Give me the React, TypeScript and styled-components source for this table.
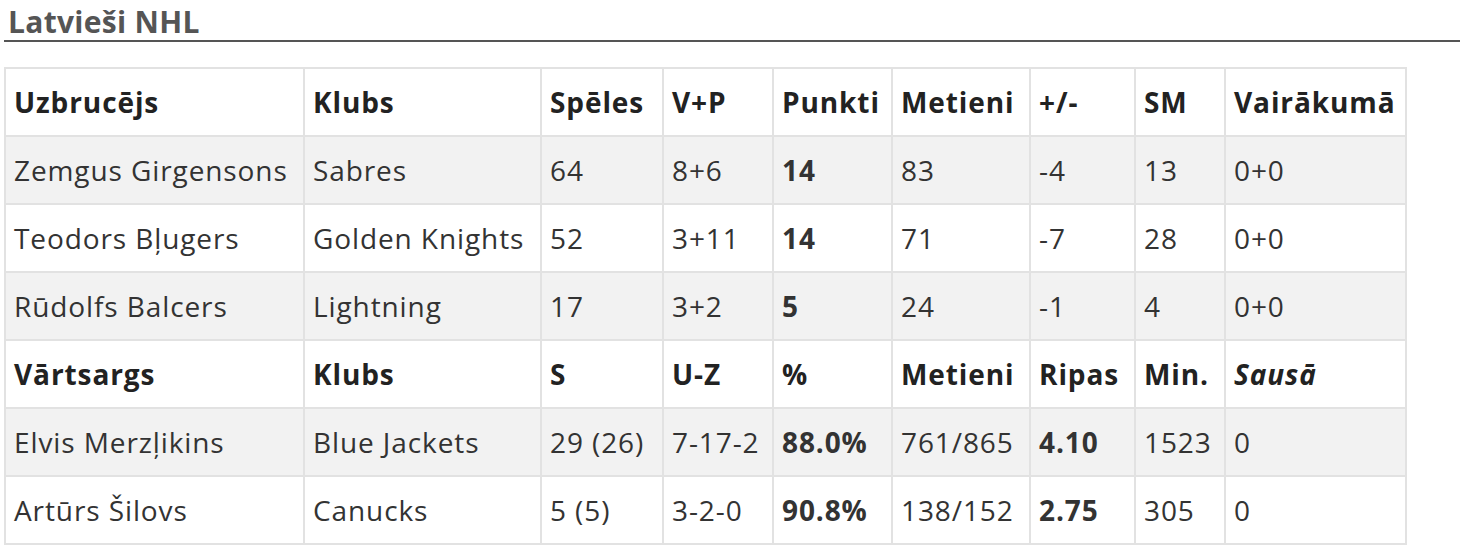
import React from "react";
import styled, { createGlobalStyle } from "styled-components";

const Global = createGlobalStyle`
  html, body { margin: 0; padding: 0; background: #fff; }
  body { font-family: "Open Sans", "Noto Sans", sans-serif; color: #333; }
`;

const Page = styled.div`
  padding: 0 0 0 4px;
`;

const Heading = styled.h2`
  margin: 0;
  padding: 3px 0 0 4px;
  height: 37px;
  font-size: 30px;
  line-height: 37px;
  font-weight: 700;
  letter-spacing: 0.3px;
  color: #555;
  border-bottom: 2px solid #555;
  box-sizing: content-box;
`;

const Table = styled.table`
  margin-top: 25px;
  border-collapse: collapse;
  table-layout: fixed;
  width: 1401px;
  border: 2px solid #e2e2e2;
`;

const Row = styled.tr<{ $shade?: boolean }>`
  height: 68px;
  background: ${(p) => (p.$shade ? "#f2f2f2" : "#fff")};
`;

const Cell = styled.td<{ $bold?: boolean; $italic?: boolean; $head?: boolean }>`
  padding: 0 6px 0 8px;
  border: 2px solid #e2e2e2;
  font-size: 28px;
  letter-spacing: 0.9px;
  white-space: nowrap;
  overflow: hidden;
  font-weight: ${(p) => (p.$bold || p.$head ? 700 : 400)};
  font-style: ${(p) => (p.$italic ? "italic" : "normal")};
  color: ${(p) => (p.$head ? "#222" : "#333")};
`;

const widths = [299, 237, 122, 110, 119, 138, 105, 90, 181];

type C = { t: string; b?: boolean; i?: boolean };
const rows: { head?: boolean; cells: C[] }[] = [
  { head: true, cells: ["Uzbrucējs", "Klubs", "Spēles", "V+P", "Punkti", "Metieni", "+/-", "SM", "Vairākumā"].map((t) => ({ t })) },
  { cells: [{ t: "Zemgus Girgensons" }, { t: "Sabres" }, { t: "64" }, { t: "8+6" }, { t: "14", b: true }, { t: "83" }, { t: "-4" }, { t: "13" }, { t: "0+0" }] },
  { cells: [{ t: "Teodors Bļugers" }, { t: "Golden Knights" }, { t: "52" }, { t: "3+11" }, { t: "14", b: true }, { t: "71" }, { t: "-7" }, { t: "28" }, { t: "0+0" }] },
  { cells: [{ t: "Rūdolfs Balcers" }, { t: "Lightning" }, { t: "17" }, { t: "3+2" }, { t: "5", b: true }, { t: "24" }, { t: "-1" }, { t: "4" }, { t: "0+0" }] },
  { head: true, cells: [{ t: "Vārtsargs" }, { t: "Klubs" }, { t: "S" }, { t: "U-Z" }, { t: "%" }, { t: "Metieni" }, { t: "Ripas" }, { t: "Min." }, { t: "Sausā", i: true }] },
  { cells: [{ t: "Elvis Merzļikins" }, { t: "Blue Jackets" }, { t: "29 (26)" }, { t: "7-17-2" }, { t: "88.0%", b: true }, { t: "761/865" }, { t: "4.10", b: true }, { t: "1523" }, { t: "0" }] },
  { cells: [{ t: "Artūrs Šilovs" }, { t: "Canucks" }, { t: "5 (5)" }, { t: "3-2-0" }, { t: "90.8%", b: true }, { t: "138/152" }, { t: "2.75", b: true }, { t: "305" }, { t: "0" }] },
];

export default function App() {
  return (
    <Page>
      <Global />
      <Heading>Latvieši NHL</Heading>
      <Table>
        <colgroup>
          {widths.map((w, i) => (
            <col key={i} style={{ width: w }} />
          ))}
        </colgroup>
        <tbody>
          {rows.map((r, ri) => (
            <Row key={ri} $shade={ri % 2 === 1}>
              {r.cells.map((c, ci) => (
                <Cell key={ci} $head={r.head} $bold={c.b} $italic={c.i}>
                  {c.t}
                </Cell>
              ))}
            </Row>
          ))}
        </tbody>
      </Table>
    </Page>
  );
}
